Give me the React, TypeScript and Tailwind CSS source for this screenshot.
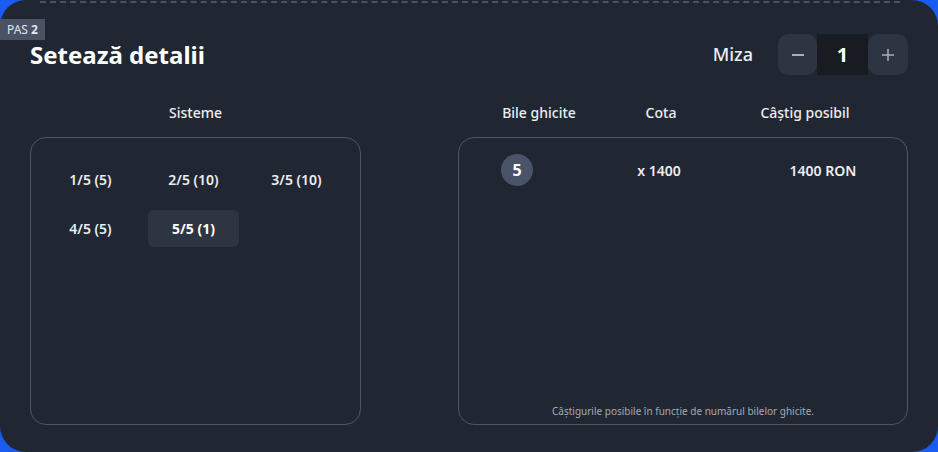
import React from 'react';

const systems = ['1/5 (5)', '2/5 (10)', '3/5 (10)', '4/5 (5)', '5/5 (1)'];

export default function App() {
  const selected = '5/5 (1)';

  return (
    <div className="w-[938px] h-[452px] bg-[#1a5cf2] overflow-hidden" style={{ fontFamily: '"Noto Sans", "Open Sans", sans-serif' }}>
      <div className="relative w-full h-full rounded-[26px] bg-[#212732] text-[#eceef1] px-[30px]">
        {/* dashed edge of the step above */}
        <div className="absolute top-[1px] left-[40px] right-[38px] border-t-2 border-dashed border-[#4b5261]" />

        {/* step badge */}
        <div className="absolute left-0 top-[19px] h-[21px] px-[7px] bg-[#4a5364] text-[12px] leading-[21px] text-[#e3e6ea]">
          PAS <span className="font-bold">2</span>
        </div>

        {/* header */}
        <div className="flex items-center justify-between pt-[34px]">
          <h1 className="text-[24px] font-bold leading-[41px] text-white">Setează detalii</h1>
          <div className="flex items-center">
            <span className="text-[18px] font-medium mr-[25px]">Miza</span>
            <div className="flex h-[41px] rounded-[10px] overflow-hidden">
              <button className="w-[39px] h-full bg-[#2e3542] rounded-[10px] flex items-center justify-center">
                <svg width="14" height="14" viewBox="0 0 14 14"><path d="M1 7h12" stroke="#d5d9df" strokeWidth="1.5" /></svg>
              </button>
              <div className="w-[51px] h-full bg-[#181b21] flex items-center justify-center text-[20px] font-bold text-white">1</div>
              <button className="w-[40px] h-full bg-[#2e3542] rounded-[10px] flex items-center justify-center">
                <svg width="14" height="14" viewBox="0 0 14 14"><path d="M1 7h12M7 1v12" stroke="#aab0ba" strokeWidth="1.5" /></svg>
              </button>
            </div>
          </div>
        </div>

        {/* columns */}
        <div className="flex justify-between mt-[21px]">
          <div className="w-[331px]">
            <div className="h-[33px] text-center text-[14px] font-medium leading-[33px]">Sisteme</div>
            <div className="h-[288px] mt-[8px] border border-[#4d5463] rounded-[16px] pt-[23px] pl-[8px]">
              <div className="grid grid-cols-[103px_103px_103px] gap-y-3">
                {systems.map((s) => (
                  <div key={s} className="flex justify-center">
                    <div
                      className={`w-[91px] h-[37px] rounded-[6px] flex items-center justify-center text-[14px] ${
                        s === selected ? 'bg-[#2e3542] font-bold text-white' : 'font-semibold'
                      }`}
                    >
                      {s}
                    </div>
                  </div>
                ))}
              </div>
            </div>
          </div>

          <div className="w-[450px]">
            <div className="flex h-[33px] text-[14px] font-medium leading-[33px]">
              <div className="w-[162px] text-center">Bile ghicite</div>
              <div className="w-[82px] text-center">Cota</div>
              <div className="flex-1 text-center">Câștig posibil</div>
            </div>
            <div className="h-[288px] mt-[8px] border border-[#4d5463] rounded-[16px] flex flex-col justify-between pt-[16px] pb-[5px]">
              <div className="grid grid-cols-[118px_164px_1fr] items-center text-[14px] font-semibold">
                <div className="pl-[42px]">
                  <div className="w-8 h-8 rounded-full bg-[#4a5469] flex items-center justify-center text-[16px] font-bold text-white">5</div>
                </div>
                <div className="text-center">x 1400</div>
                <div className="text-center pr-[2px]">1400 RON</div>
              </div>
              <div className="text-center text-[10px] text-[#a4aab3]">Câștigurile posibile în funcție de numărul bilelor ghicite.</div>
            </div>
          </div>
        </div>
      </div>
    </div>
  );
}
